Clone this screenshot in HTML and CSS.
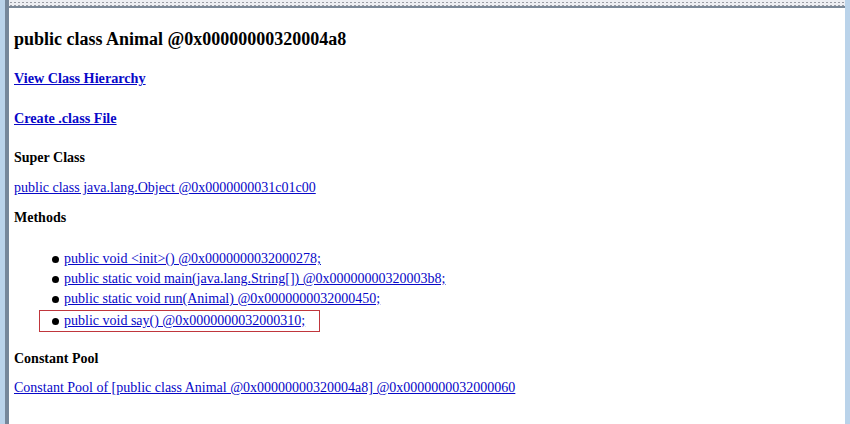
FILE: index.html
```html
<!DOCTYPE html>
<html lang="en">
<head>
    <meta charset="UTF-8">
    <title>Animal</title>
    <link rel="stylesheet" href="styles.css">
</head>
<body>
    <div class="frame">
        <div class="dots"></div>
        <div class="panel">
            <h3 class="title">public class Animal @0x00000000320004a8</h3>
            <a class="big-link link-first" href="#">View Class Hierarchy</a>
            <a class="big-link" href="#">Create .class File</a>
            <h4 class="section">Super Class</h4>
            <a class="link" href="#">public class java.lang.Object @0x0000000031c01c00</a>
            <h4 class="section section-methods">Methods</h4>
            <ul class="methods">
                <li><a class="link" href="#">public void &lt;init&gt;() @0x0000000032000278;</a></li>
                <li><a class="link" href="#">public static void main(java.lang.String[]) @0x00000000320003b8;</a></li>
                <li><a class="link" href="#">public static void run(Animal) @0x0000000032000450;</a></li>
                <li class="marked"><a class="link" href="#">public void say() @0x0000000032000310;</a></li>
            </ul>
            <h4 class="section section-pool">Constant Pool</h4>
            <a class="link" href="#">Constant Pool of [public class Animal @0x00000000320004a8] @0x0000000032000060</a>
        </div>
    </div>
</body>
</html>
```

FILE: styles.css
```css
* {
    margin: 0;
    padding: 0;
}
body {
    background: #bad3ea;
    font-family: "Liberation Serif", "Times New Roman", serif;
    overflow: hidden;
}
.frame {
    margin: 0 5px 0 5px;
    height: 424px;
    border-left: 4px solid #76879a;
    display: flex;
    flex-direction: column;
}
.dots {
    height: 6px;
    background-color: #eeeff3;
    background-image: radial-gradient(circle, #9a9ca4 0.8px, transparent 1px);
    background-size: 4px 3px;
    background-position: 0 1px;
}
.panel {
    flex: 1;
    background: #ffffff;
    border-top: 2px solid #7b8897;
    padding: 0 5px;
    display: flex;
    flex-direction: column;
    align-items: flex-start;
    line-height: 20px;
    color: #000000;
}
a {
    color: #0808c8;
}
.title {
    font-size: 18px;
    margin-top: 21px;
}
.big-link {
    font-weight: bold;
    font-size: 14.2px;
    margin-top: 20px;
}
.link-first {
    margin-top: 19px;
}
.section {
    font-size: 14px;
    margin-top: 20px;
    margin-bottom: 10px;
}
.link {
    font-size: 14px;
}
.section-methods {
    margin-top: 10px;
}
.methods {
    list-style: none;
    margin: 10px 0 0 25px;
    display: flex;
    flex-direction: column;
    align-items: flex-start;
}
.methods li {
    display: flex;
    align-items: center;
    gap: 5px;
    padding: 0 14px 0 12px;
    border: 1px solid transparent;
    margin-top: -2px;
}
.methods li:first-child {
    margin-top: 0;
}
.methods li::before {
    content: "";
    width: 7px;
    height: 7px;
    border-radius: 50%;
    background: #000000;
}
.methods li.marked {
    border-color: #c0363c;
    margin-top: 0;
}
.section-pool {
    margin-top: 17px;
    margin-bottom: 9px;
}
```
